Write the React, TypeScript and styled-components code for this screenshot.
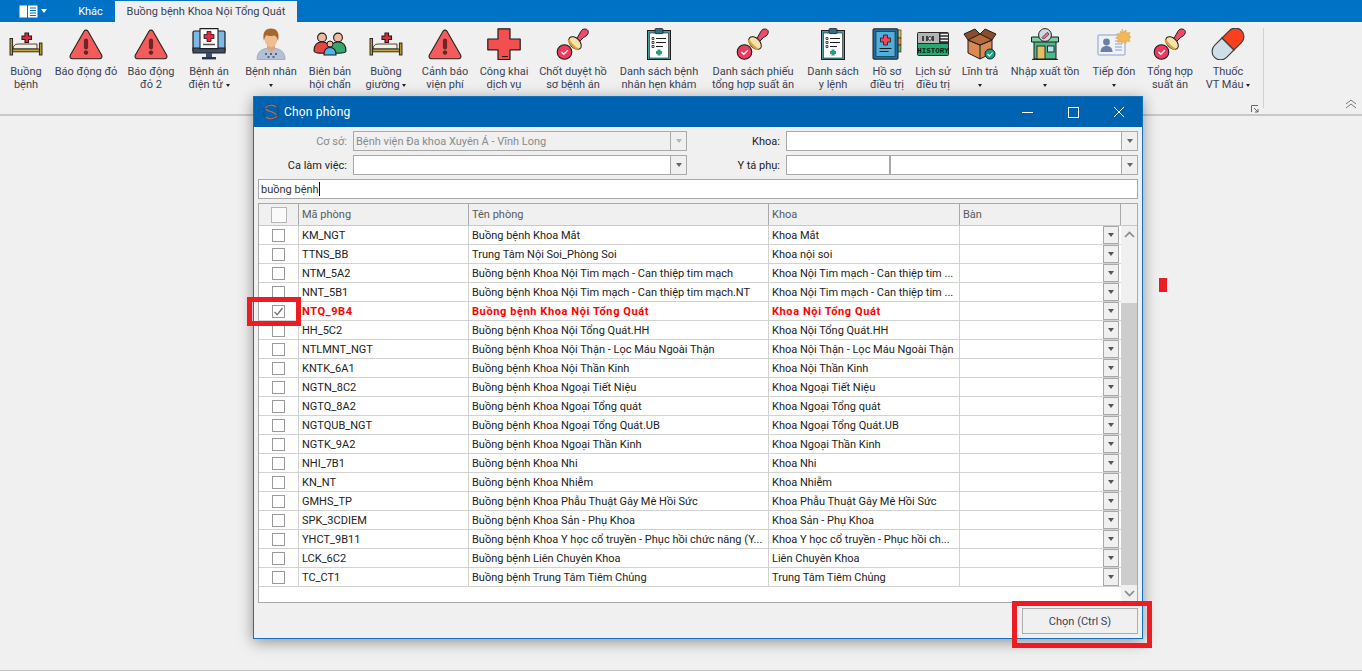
import React from 'react';
import styled, { createGlobalStyle } from 'styled-components';

const FONT = `Roboto, "Noto Sans", "Liberation Sans", sans-serif`;
const TS = '11px';

const Global = createGlobalStyle`
  html, body { margin: 0; padding: 0; background: #f0f0f0; overflow: hidden; }
  * { box-sizing: border-box; }
  body { font-family: ${FONT}; font-size: ${TS}; }
`;

const Page = styled.div`
  position: relative;
  width: 1362px;
  height: 671px;
  display: flex;
  flex-direction: column;
  background: #f0f0f0;
  overflow: hidden;
`;
const TabBar = styled.div`
  height: 22px;
  flex: none;
  background: #0072c6;
  display: flex;
  align-items: flex-end;
  padding-left: 19px;
`;
const QuickMenu = styled.div`
  width: 47px;
  height: 22px;
  display: flex;
  align-items: center;
  gap: 3px;
`;
const Tab = styled.div<{ $active?: boolean; $w: number }>`
  width: ${p => p.$w}px;
  height: ${p => (p.$active ? 21 : 22)}px;
  display: flex;
  align-items: center;
  justify-content: center;
  color: ${p => (p.$active ? '#3a4256' : '#fff')};
  background: ${p => (p.$active ? '#f0f0f0' : 'transparent')};
  font-size: ${TS};
  white-space: nowrap;
`;
const Ribbon = styled.div`
  height: 94px;
  flex: none;
  display: flex;
  position: relative;
  padding: 6px 0 0 4px;
  background: #f0f0f0;
  border-bottom: 2px solid #c8c8c8;
`;
const RibbonItem = styled.div<{ $w: number }>`
  width: ${p => p.$w}px;
  flex: none;
  display: flex;
  flex-direction: column;
  align-items: center;
  color: #3a4256;
  font-size: ${TS};
  line-height: 13px;
  text-align: center;
  white-space: nowrap;
`;
const RibbonIcon = styled.div`
  height: 32px;
  width: 34px;
  margin-bottom: 5px;
  display: flex;
  align-items: center;
  justify-content: center;
`;
const Caret = styled.span`
  display: inline-block;
  width: 0;
  height: 0;
  border-left: 2.5px solid transparent;
  border-right: 2.5px solid transparent;
  border-top: 3px solid #222;
  vertical-align: middle;
`;
const RibbonSep = styled.div`
  width: 1px;
  height: 80px;
  background: #d0d0d0;
  margin-left: 5px;
`;
const Launcher = styled.div`
  position: absolute;
  left: 1251px;
  top: 81px;
  width: 8px;
  height: 8px;
`;
const Collapse = styled.div`
  position: absolute;
  left: 1345px;
  top: 77px;
  width: 12px;
  height: 10px;
`;
const Workspace = styled.div`
  flex: 1;
  border-bottom: 1px solid #c4c4c4;
  background: #f0f0f0;
`;
const RedMark = styled.div`
  position: absolute;
  left: 1159px;
  top: 278px;
  width: 8px;
  height: 14px;
  background: #ed1c24;
`;
const RedFrame = styled.div<{ $l: number; $t: number; $w: number; $h: number }>`
  position: absolute;
  left: ${p => p.$l}px;
  top: ${p => p.$t}px;
  width: ${p => p.$w}px;
  height: ${p => p.$h}px;
  border: 5px solid #ed1c24;
  pointer-events: none;
`;
const Dialog = styled.div`
  position: absolute;
  left: 253px;
  top: 96px;
  width: 890px;
  height: 543px;
  display: flex;
  flex-direction: column;
  background: #f0f0f0;
  border: 1px solid #1272c0;
  box-shadow: 0 3px 14px rgba(0, 0, 0, 0.4);
`;
const TitleBar = styled.div`
  height: 30px;
  flex: none;
  background: #0063b1;
  color: #fff;
  display: flex;
  align-items: center;
  font-size: 12px;
  padding-left: 8px;
  gap: 4px;
`;
const TitleText = styled.div`
  flex: 1;
  letter-spacing: 0.2px;
`;
const WinButtons = styled.div`
  display: flex;
  align-items: center;
`;
const WinButton = styled.div`
  width: 46px;
  height: 30px;
  display: flex;
  align-items: center;
  justify-content: center;
`;
const Body = styled.div`
  flex: 1;
  display: flex;
  flex-direction: column;
  padding: 4px 4px 0 4px;
  gap: 4px;
  min-height: 0;
`;
const FormRow = styled.div`
  display: flex;
  height: 20px;
  align-items: stretch;
`;
const FieldLabel = styled.div<{ $w: number; $disabled?: boolean }>`
  width: ${p => p.$w}px;
  flex: none;
  padding-right: 6px;
  text-align: right;
  line-height: 22px;
  font-size: ${TS};
  color: ${p => (p.$disabled ? '#8a8a8a' : '#222')};
`;
const Combo = styled.div<{ $w: number; $disabled?: boolean }>`
  width: ${p => p.$w}px;
  flex: none;
  display: flex;
  border: 1px solid #a9a9a9;
  background: ${p => (p.$disabled ? '#f0f0f0' : '#fff')};
  color: ${p => (p.$disabled ? '#8a8a8a' : '#222')};
  font-size: ${TS};
  line-height: 20px;
`;
const ComboText = styled.div`
  flex: 1;
  padding-left: 2px;
  white-space: nowrap;
  overflow: hidden;
`;
const ComboSplit = styled.div`
  width: 104px;
  flex: none;
  border-right: 2px solid #a9a9a9;
`;
const ComboBtn = styled.div<{ $disabled?: boolean }>`
  width: 16px;
  flex: none;
  border-left: 1px solid #a9a9a9;
  background: #f0f0f0;
  display: flex;
  align-items: center;
  justify-content: center;
  &::after {
    content: '';
    width: 0;
    height: 0;
    border-left: 3.5px solid transparent;
    border-right: 3.5px solid transparent;
    border-top: 4px solid ${p => (p.$disabled ? '#b5b5b5' : '#666')};
  }
`;
const SearchBox = styled.div`
  height: 20px;
  flex: none;
  border: 1px solid #a9a9a9;
  background: #fff;
  color: #333;
  font-size: ${TS};
  line-height: 20px;
  padding-left: 2px;
  display: flex;
`;
const Cursor = styled.span`
  width: 1px;
  height: 14px;
  margin: 2px 0 0 0;
  background: #111;
`;
const Grid = styled.div`
  height: 400px;
  flex: none;
  border: 1px solid #a9a9a9;
  background: #fff;
  display: flex;
  flex-direction: column;
`;
const HeadRow = styled.div`
  height: 22px;
  flex: none;
  display: flex;
  background: #f0f0f0;
  border-bottom: 1px solid #c8c8c8;
`;
const HeadCell = styled.div<{ $w: number; $center?: boolean }>`
  width: ${p => p.$w}px;
  flex: none;
  border-right: 1px solid #a9a9a9;
  padding-left: 3px;
  color: #5a5a5a;
  font-size: ${TS};
  line-height: 22px;
  display: flex;
  align-items: ${p => (p.$center ? 'center' : 'stretch')};
  justify-content: ${p => (p.$center ? 'center' : 'flex-start')};
  ${p => (p.$center ? 'padding-left: 0;' : '')}
`;
const HeadFill = styled.div`
  flex: 1;
`;
const GridMain = styled.div`
  flex: 1;
  display: flex;
  min-height: 0;
`;
const Rows = styled.div`
  width: 862px;
  flex: none;
`;
const Row = styled.div<{ $selected?: boolean }>`
  height: 19px;
  display: flex;
  border-bottom: 1px solid #d2d2d2;
  color: ${p => (p.$selected ? '#ff0000' : '#222')};
  font-weight: ${p => (p.$selected ? 700 : 400)};
  letter-spacing: ${p => (p.$selected ? '0.6px' : 'normal')};
`;
const Cell = styled.div<{ $w: number }>`
  width: ${p => p.$w}px;
  flex: none;
  border-right: 1px solid #d2d2d2;
  padding-left: 3px;
  font-size: ${TS};
  line-height: 20px;
  white-space: nowrap;
  overflow: hidden;
`;
const CheckCell = styled.div`
  width: 40px;
  flex: none;
  border-right: 1px solid #d2d2d2;
  display: flex;
  align-items: center;
  justify-content: center;
`;
const CheckBox = styled.div<{ $head?: boolean }>`
  width: ${p => (p.$head ? 16 : 13)}px;
  height: ${p => (p.$head ? 16 : 13)}px;
  border: 1px solid ${p => (p.$head ? '#b5b5b5' : '#9a9a9a')};
  background: ${p => (p.$head ? '#fafafa' : '#fff')};
  display: flex;
  align-items: center;
  justify-content: center;
`;
const BanCell = styled.div`
  flex: 1;
  display: flex;
  justify-content: flex-end;
  padding: 0 2px 0 0;
`;
const RowBtn = styled.div`
  width: 16px;
  height: 18px;
  border: 1px solid #a9a9a9;
  background: #f0f0f0;
  display: flex;
  align-items: center;
  justify-content: center;
  &::after {
    content: '';
    width: 0;
    height: 0;
    border-left: 3.5px solid transparent;
    border-right: 3.5px solid transparent;
    border-top: 4px solid #555;
  }
`;
const ScrollBar = styled.div`
  flex: 1;
  display: flex;
  flex-direction: column;
  background: #f0f0f0;
`;
const ScrollArrow = styled.div`
  height: 17px;
  flex: none;
  display: flex;
  align-items: center;
  justify-content: center;
`;
const ScrollTrack = styled.div`
  height: 60px;
  flex: none;
`;
const ScrollThumb = styled.div`
  flex: 1;
  background: #cdcdcd;
`;
const Footer = styled.div`
  flex: 1;
  display: flex;
  justify-content: flex-end;
  align-items: flex-start;
  padding-top: 1px;
`;
const ChooseButton = styled.div`
  width: 116px;
  height: 26px;
  border: 1px solid #adadad;
  background: #f0f0f0;
  color: #3a4256;
  font-size: ${TS};
  padding-top: 1px;
  display: flex;
  align-items: center;
  justify-content: center;
`;

/* ---------- drawn icons ---------- */
const K = '#1d1d1d';
const Bed = () => (
  <svg width="34" height="32" viewBox="0 0 34 32">
    <path d="M16 5h3.500v3h3v3.500h-3v3H16v-3h-3V8h3z" fill="#e5293f" stroke={K} strokeWidth="1.100" />
    <path d="M4 21c0-3 2-5 5-5h19v5z" fill="#f3f0e0" stroke={K} strokeWidth=".8" />
    <rect x="1" y="10.500" width="2.600" height="16.500" fill="#b8962e" stroke={K} strokeWidth=".9" />
    <rect x="30.400" y="15" width="2.600" height="12" fill="#b8962e" stroke={K} strokeWidth=".9" />
    <path d="M3.600 21h26.800v2.800H3.600z" fill="#c9a63a" stroke={K} strokeWidth=".9" />
  </svg>
);
const Alert = () => (
  <svg width="34" height="32" viewBox="0 0 34 32">
    <path d="M15 3.200c1-1.400 3-1.400 4 0L32.600 27c1 1.800 0 3.800-2 3.800H3.400c-2 0-3-2-2-3.800z" fill="#f45b5b" stroke="#222" strokeWidth="1.100" />
    <rect x="15.400" y="11" width="3.200" height="10" rx="1.400" fill="#7a1f25" stroke="#222" strokeWidth=".6" />
    <circle cx="17" cy="24.600" r="1.800" fill="#7a1f25" stroke="#222" strokeWidth=".6" />
  </svg>
);
const Monitor = () => (
  <svg width="34" height="32" viewBox="0 0 34 32">
    <rect x="1" y="3" width="32" height="21" rx="1.500" fill="#7db8e8" stroke={K} strokeWidth="1.200" />
    <rect x="1" y="20" width="32" height="5" fill="#3b4f68" stroke={K} strokeWidth="1" />
    <path d="M8 .6h18v20H8z" fill="#fff" stroke={K} strokeWidth="1.100" />
    <path d="M15 3.500h4v3h3v4h-3v3h-4v-3h-3v-4h3z" fill="#e5293f" stroke={K} strokeWidth=".8" />
    <path d="M11 16.500h12" stroke="#555" strokeWidth="1.600" />
    <rect x="14" y="25" width="6" height="4" fill="#3b4f68" />
    <rect x="10" y="29" width="14" height="2.400" fill="#26364a" />
  </svg>
);
const Person = () => (
  <svg width="34" height="32" viewBox="0 0 34 32">
    <path d="M3 31.500c0-8 5-11.500 14-11.500s14 3.500 14 11.500z" fill="#b5bfd6" stroke="#98a2b8" strokeWidth=".8" />
    <path d="M13 17h8v4l-4 3-4-3z" fill="#dca67c" />
    <ellipse cx="17" cy="11.500" rx="6.400" ry="7.500" fill="#edbd94" />
    <path d="M10 13C8 5 11 .5 17 .5S26 5 24 13c-.5-3-2-5.500-4-5.500-3 1-6 .5-7.500-.5-1.500 1.500-2 3-2.500 6z" fill="#a8652c" />
    <path d="M11 26h2M16 26h2M21 26h2M13.500 29h2M18.500 29h2" stroke="#56648c" strokeWidth="1.800" />
  </svg>
);
const Group = () => (
  <svg width="34" height="32" viewBox="0 0 34 32">
    <circle cx="9" cy="9.500" r="4.400" fill="#f0b9a0" stroke={K} strokeWidth="1.100" />
    <circle cx="25" cy="9.500" r="4.400" fill="#f0b9a0" stroke={K} strokeWidth="1.100" />
    <path d="M1 23c0-6 3-9 8-9s8 3 8 9c0 3-16 3-16 0z" fill="#e5463f" stroke={K} strokeWidth="1.100" />
    <path d="M17 23c0-6 3-9 8-9s8 3 8 9c0 3-16 3-16 0z" fill="#34a86a" stroke={K} strokeWidth="1.100" />
    <circle cx="17" cy="16" r="3" fill="#f0b9a0" stroke={K} strokeWidth="1" />
    <path d="M11 27c0-5 2.500-7.500 6-7.500s6 2.500 6 7.500z" fill="#53b3e8" stroke={K} strokeWidth="1.100" />
  </svg>
);
const Cross = () => (
  <svg width="34" height="32" viewBox="0 0 34 32">
    <path d="M11 .8h12v10.200h10.200v10.800H23V31.600H11V21.800H.8V11H11z" fill="#f25050" stroke={K} strokeWidth="1.200" strokeLinejoin="round" />
    <path d="M15 28.500h6" stroke={K} strokeWidth="1" />
  </svg>
);
const Stamp = () => (
  <svg width="34" height="32" viewBox="0 0 34 32">
    <path d="M20 12l4-7c1-2 2-4 4.500-4 3 0 4.500 2 3.500 4.500-.5 2-3 3-4.500 4L22 15z" fill="#f04a6a" stroke={K} strokeWidth="1" />
    <ellipse cx="19" cy="15" rx="4.800" ry="7.500" transform="rotate(-45 19 15)" fill="#f7e3a8" stroke={K} strokeWidth="1" />
    <path d="M12.500 12c2.500 5 5 7 9.500 9.500" stroke="#d8a13c" strokeWidth="2.500" fill="none" />
    <circle cx="8.500" cy="24" r="7.300" fill="#ef3a5d" stroke={K} strokeWidth="1.100" />
    <path d="M5.500 24l2.300 2.300 4-4" stroke="#fff" strokeWidth="1.400" fill="none" />
  </svg>
);
const Clipboard = () => (
  <svg width="34" height="32" viewBox="0 0 34 32">
    <rect x="5.500" y="2.500" width="23" height="29" fill="#4e98a6" stroke={K} strokeWidth="1" />
    <rect x="7.500" y="5" width="19" height="25" fill="#fff" stroke={K} strokeWidth=".6" />
    <rect x="13" y=".6" width="8" height="5" rx="1" fill="#2f6f8a" stroke={K} strokeWidth=".8" />
    <path d="M10 9.500h2v2h-2zM10 13.500h2v2h-2zM10 17.500h2v2h-2z" fill="#fff" stroke={K} strokeWidth=".8" />
    <path d="M14 10.500h10M14 14.500h10M14 18.500h7" stroke={K} strokeWidth="1" />
    <path d="M15.500 21.500h3v1.500h1.500v3h-1.500v1.500h-3V26H14v-3h1.500z" fill="#2d9c86" />
  </svg>
);
const Book = () => (
  <svg width="34" height="32" viewBox="0 0 34 32">
    <rect x="27" y="2" width="4" height="8" fill="#d8c060" stroke={K} strokeWidth=".6" />
    <rect x="27" y="10" width="4" height="7" fill="#e89040" stroke={K} strokeWidth=".6" />
    <rect x="27" y="17" width="4" height="7" fill="#60b070" stroke={K} strokeWidth=".6" />
    <rect x="3" y=".8" width="25" height="30.400" rx="1" fill="#1f6ea8" stroke={K} strokeWidth="1" />
    <rect x="6" y="3.500" width="19" height="25" fill="#4fb0dc" stroke={K} strokeWidth=".6" />
    <path d="M13.500 7h4v3h3v4h-3v3h-4v-3h-3v-4h3z" fill="#f0455a" stroke={K} strokeWidth=".8" />
    <path d="M9.500 20.500h12M9.500 23.500h9" stroke={K} strokeWidth="1" />
  </svg>
);
const History = () => (
  <svg width="34" height="32" viewBox="0 0 34 32">
    <rect x="1" y="4" width="32" height="24" rx="2" fill="#2a2a2a" />
    <rect x="2" y="5" width="21" height="10" fill="#b4b4b4" />
    <path d="M7 8v5M11 8v5M17 8v5" stroke="#111" strokeWidth="1.400" />
    <circle cx="14" cy="10.500" r="1.800" fill="#ddd" stroke="#111" strokeWidth=".8" />
    <path d="M24.500 6.500H32M24.500 9.500H32M24.500 12.500H32" stroke="#eee" strokeWidth="1.400" />
    <rect x="2" y="16" width="30" height="11" fill="#2aa873" />
    <text x="17" y="24.500" fontSize="7.500" fontWeight="700" textAnchor="middle" fontFamily="Liberation Mono, monospace" fill="#0b1f16">HISTORY</text>
  </svg>
);
const BoxIco = () => (
  <svg width="34" height="32" viewBox="0 0 34 32">
    <path d="M5 12l12 5 12-5v13l-12 6-12-6z" fill="#d98a52" stroke={K} strokeWidth="1" />
    <path d="M17 17v14" stroke={K} strokeWidth="1" />
    <path d="M5 12L1 6l11-5 5 5 5-5 11 5-4 6-12 5z" fill="#8c4d2c" stroke={K} strokeWidth="1" strokeLinejoin="round" />
    <path d="M5 12l12-6 12 6-12 5z" stroke={K} strokeWidth="1" fill="#b56a3c" />
    <circle cx="27" cy="26" r="5" fill="#14a38a" stroke={K} strokeWidth="1" />
    <path d="M24.500 26l2 2 3-3.500" stroke="#fff" strokeWidth="1.100" fill="none" />
  </svg>
);
const Shop = () => (
  <svg width="34" height="32" viewBox="0 0 34 32">
    <rect x="6" y="12" width="22" height="19" fill="#4cb98a" stroke={K} strokeWidth="1" />
    <path d="M3.500 9h27v5h-27z" fill="#79cf9f" stroke={K} strokeWidth="1" />
    <rect x="9" y="18" width="8" height="13" fill="#e4c060" stroke={K} strokeWidth=".9" />
    <rect x="19.500" y="18" width="6.500" height="6" fill="#bfe0f0" stroke={K} strokeWidth=".9" />
    <circle cx="17" cy="7" r="6.400" fill="#cfdce6" stroke={K} strokeWidth="1" />
    <path d="M14 9.500l5-5c1.500 0 2 1 1.500 2.500l-4 3.500c-1.500.5-2.500 0-2.500-1z" fill="#ef6a7a" stroke={K} strokeWidth=".6" />
    <path d="M4 31.400h26" stroke={K} strokeWidth="1" />
  </svg>
);
const IdCard = () => (
  <svg width="34" height="32" viewBox="0 0 34 32">
    <rect x="1" y="7" width="27" height="20" rx="1" fill="#eef2fa" stroke="#8aa0cc" strokeWidth="1" />
    <circle cx="9.500" cy="14" r="3.400" fill="#6d7fa3" />
    <path d="M3.500 24c0-4 2.500-6 6-6s6 2 6 6z" fill="#6d7fa3" />
    <path d="M18 13h7M18 16h7M18 19h7M18 22h7" stroke="#8ca0c6" strokeWidth="1" />
    <path d="M25 1l1.500 3 2.500-2 .5 3 3.500-.5-1 3 2 1.500-2 1.500 1 3-3.500-.5-.5 2.500-2.500-2-1.500 2.500-1.500-2.500-2.500 1 .5-3-3-1.500 2.500-1.500-1-3 3 .5.500-3 2 2z" fill="#f0b85a" stroke="#d89a3c" strokeWidth=".5" />
  </svg>
);
const Pill = () => (
  <svg width="34" height="32" viewBox="0 0 34 32">
    <g transform="rotate(-45 17 16)">
      <path d="M17 7.500H6.500a8.500 8.500 0 000 17H17z" fill="#cfdfe8" stroke="#3a3a3a" strokeWidth="1.100" />
      <path d="M17 7.500h10.500a8.500 8.500 0 010 17H17z" fill="#f8401f" stroke="#3a3a3a" strokeWidth="1.100" />
    </g>
  </svg>
);
const Check = () => (
  <svg width="11" height="11" viewBox="0 0 11 11">
    <path d="M1.500 6l2.700 2.700 5.300-6.700" fill="none" stroke="#777" strokeWidth="1.400" />
  </svg>
);
const Logo = () => (
  <svg width="18" height="18" viewBox="0 0 18 18">
    <circle cx="9" cy="9" r="7.600" fill="none" stroke="#174d80" strokeWidth="1.400" />
    <path d="M3 5c2-3 8-4 11-1M15 13c-2 3-8 4-11 1M4 6c1 3 9 2 10 6" fill="none" stroke="#c9683a" strokeWidth="1.200" />
  </svg>
);
const Chevron = ({ up }: { up?: boolean }) => (
  <svg width="11" height="7" viewBox="0 0 11 7">
    <path d={up ? 'M1 6l4.500-4.500L10 6' : 'M1 1l4.500 4.500L10 1'} fill="none" stroke="#8a8a8a" strokeWidth="1.700" />
  </svg>
);

type RibbonDef = { w: number; icon: React.ReactNode; l1: string; l2?: string; caret?: boolean };
const ribbon: RibbonDef[] = [
  { w: 44, icon: <Bed />, l1: 'Buồng', l2: 'bệnh' },
  { w: 76, icon: <Alert />, l1: 'Báo động đỏ' },
  { w: 54, icon: <Alert />, l1: 'Báo động', l2: 'đỏ 2' },
  { w: 62, icon: <Monitor />, l1: 'Bệnh án', l2: 'điện tử', caret: true },
  { w: 62, icon: <Person />, l1: 'Bệnh nhân', l2: '', caret: true },
  { w: 56, icon: <Group />, l1: 'Biên bản', l2: 'hội chẩn' },
  { w: 56, icon: <Bed />, l1: 'Buồng', l2: 'giường', caret: true },
  { w: 62, icon: <Alert />, l1: 'Cảnh báo', l2: 'viện phí' },
  { w: 56, icon: <Cross />, l1: 'Công khai', l2: 'dịch vụ' },
  { w: 82, icon: <Stamp />, l1: 'Chốt duyệt hồ', l2: 'sơ bệnh án' },
  { w: 90, icon: <Clipboard />, l1: 'Danh sách bệnh', l2: 'nhân hẹn khám' },
  { w: 98, icon: <Stamp />, l1: 'Danh sách phiếu', l2: 'tổng hợp suất ăn' },
  { w: 62, icon: <Clipboard />, l1: 'Danh sách', l2: 'y lệnh' },
  { w: 46, icon: <Book />, l1: 'Hồ sơ', l2: 'điều trị' },
  { w: 46, icon: <History />, l1: 'Lịch sử', l2: 'điều trị' },
  { w: 48, icon: <BoxIco />, l1: 'Lĩnh trả', l2: '', caret: true },
  { w: 82, icon: <Shop />, l1: 'Nhập xuất tồn', l2: '', caret: true },
  { w: 56, icon: <IdCard />, l1: 'Tiếp đón', l2: '', caret: true },
  { w: 56, icon: <Stamp />, l1: 'Tổng hợp', l2: 'suất ăn' },
  { w: 60, icon: <Pill />, l1: 'Thuốc', l2: 'VT Máu', caret: true },
];

const rows: [string, string, string, boolean?][] = [
  ['KM_NGT', 'Buồng bệnh Khoa Mắt', 'Khoa Mắt'],
  ['TTNS_BB', 'Trung Tâm Nội Soi_Phòng Soi', 'Khoa nội soi'],
  ['NTM_5A2', 'Buồng bệnh Khoa Nội Tim mạch - Can thiệp tim mạch', 'Khoa Nội Tim mạch - Can thiệp tim ...'],
  ['NNT_5B1', 'Buồng bệnh Khoa Nội Tim mạch - Can thiệp tim mạch.NT', 'Khoa Nội Tim mạch - Can thiệp tim ...'],
  ['NTQ_9B4', 'Buồng bệnh Khoa Nội Tổng Quát', 'Khoa Nội Tổng Quát', true],
  ['HH_5C2', 'Buồng bệnh Khoa Nội Tổng Quát.HH', 'Khoa Nội Tổng Quát.HH'],
  ['NTLMNT_NGT', 'Buồng bệnh Khoa Nội Thận - Lọc Máu Ngoài Thận', 'Khoa Nội Thận - Lọc Máu Ngoài Thận'],
  ['KNTK_6A1', 'Buồng bệnh Khoa Nội Thần Kinh', 'Khoa Nội Thần Kinh'],
  ['NGTN_8C2', 'Buồng bệnh Khoa Ngoại Tiết Niệu', 'Khoa Ngoại Tiết Niệu'],
  ['NGTQ_8A2', 'Buồng bệnh Khoa Ngoại Tổng quát', 'Khoa Ngoại Tổng quát'],
  ['NGTQUB_NGT', 'Buồng bệnh Khoa Ngoại Tổng Quát.UB', 'Khoa Ngoại Tổng Quát.UB'],
  ['NGTK_9A2', 'Buồng bệnh Khoa Ngoại Thần Kinh', 'Khoa Ngoại Thần Kinh'],
  ['NHI_7B1', 'Buồng bệnh Khoa Nhi', 'Khoa Nhi'],
  ['KN_NT', 'Buồng bệnh Khoa Nhiễm', 'Khoa Nhiễm'],
  ['GMHS_TP', 'Buồng bệnh Khoa Phẫu Thuật Gây Mê Hồi Sức', 'Khoa Phẫu Thuật Gây Mê Hồi Sức'],
  ['SPK_3CDIEM', 'Buồng bệnh Khoa Sản - Phụ Khoa', 'Khoa Sản - Phụ Khoa'],
  ['YHCT_9B11', 'Buồng bệnh Khoa Y học cổ truyền - Phục hồi chức năng (Y...', 'Khoa Y học cổ truyền - Phục hồi ch...'],
  ['LCK_6C2', 'Buồng bệnh Liên Chuyên Khoa', 'Liên Chuyên Khoa'],
  ['TC_CT1', 'Buồng bệnh Trung Tâm Tiêm Chủng', 'Trung Tâm Tiêm Chủng'],
];

export default function App() {
  return (
    <Page>
      <Global />
      <TabBar>
        <QuickMenu>
          <svg width="19" height="13" viewBox="0 0 19 13">
            <rect x=".5" y=".5" width="18" height="12" fill="#fff" />
            <path d="M8.500 0v13" stroke="#0072c6" strokeWidth="1" />
            <path d="M11 3h6M11 5.500h6M11 8h6M11 10.500h6" stroke="#0072c6" strokeWidth="1" />
          </svg>
          <svg width="6" height="4" viewBox="0 0 6 4"><path d="M0 0h6L3 4z" fill="#fff" /></svg>
        </QuickMenu>
        <Tab $w={49}>Khác</Tab>
        <Tab $active $w={182}>Buồng bệnh Khoa Nội Tổng Quát</Tab>
      </TabBar>
      <Ribbon>
        {ribbon.map((r, i) => (
          <RibbonItem key={i} $w={r.w}>
            <RibbonIcon>{r.icon}</RibbonIcon>
            <div>{r.l1}</div>
            {r.l2 !== undefined && (
              <div>
                {r.l2}
                {r.caret && (r.l2 ? ' ' : '')}
                {r.caret && <Caret />}
              </div>
            )}
          </RibbonItem>
        ))}
        <RibbonSep />
        <Launcher>
          <svg width="8" height="8" viewBox="0 0 8 8">
            <path d="M.5 7V.5H7M3 3l4 4M4 7h3V4" fill="none" stroke="#666" strokeWidth="1" />
          </svg>
        </Launcher>
        <Collapse>
          <svg width="12" height="10" viewBox="0 0 12 10">
            <path d="M1 5l5-4 5 4M1 9l5-4 5 4" fill="none" stroke="#777" strokeWidth="1" />
          </svg>
        </Collapse>
      </Ribbon>
      <Workspace />
      <RedMark />
      <Dialog>
        <TitleBar>
          <Logo />
          <TitleText>Chọn phòng</TitleText>
          <WinButtons>
            <WinButton>
              <svg width="11" height="11" viewBox="0 0 11 11"><path d="M0 5.500h11" stroke="#fff" /></svg>
            </WinButton>
            <WinButton>
              <svg width="11" height="11" viewBox="0 0 11 11"><rect x=".5" y=".5" width="10" height="10" fill="none" stroke="#fff" /></svg>
            </WinButton>
            <WinButton>
              <svg width="12" height="12" viewBox="0 0 12 12"><path d="M1 1l10 10M11 1L1 11" stroke="#fff" /></svg>
            </WinButton>
          </WinButtons>
        </TitleBar>
        <Body>
          <FormRow>
            <FieldLabel $w={95} $disabled>Cơ sở:</FieldLabel>
            <Combo $w={334} $disabled>
              <ComboText>Bệnh viện Đa khoa Xuyên Á - Vĩnh Long</ComboText>
              <ComboBtn $disabled />
            </Combo>
            <FieldLabel $w={99}>Khoa:</FieldLabel>
            <Combo $w={352}>
              <ComboText />
              <ComboBtn />
            </Combo>
          </FormRow>
          <FormRow>
            <FieldLabel $w={95}>Ca làm việc:</FieldLabel>
            <Combo $w={334}>
              <ComboText />
              <ComboBtn />
            </Combo>
            <FieldLabel $w={99}>Y tá phụ:</FieldLabel>
            <Combo $w={352}>
              <ComboSplit />
              <ComboText />
              <ComboBtn />
            </Combo>
          </FormRow>
          <SearchBox>
            buồng bệnh
            <Cursor />
          </SearchBox>
          <Grid>
            <HeadRow>
              <HeadCell $w={40} $center><CheckBox $head /></HeadCell>
              <HeadCell $w={170}>Mã phòng</HeadCell>
              <HeadCell $w={300}>Tên phòng</HeadCell>
              <HeadCell $w={191}>Khoa</HeadCell>
              <HeadCell $w={161}>Bàn</HeadCell>
              <HeadFill />
            </HeadRow>
            <GridMain>
              <Rows>
                {rows.map(([code, name, dept, sel]) => (
                  <Row key={code} $selected={sel}>
                    <CheckCell>
                      <CheckBox>{sel && <Check />}</CheckBox>
                    </CheckCell>
                    <Cell $w={170}>{code}</Cell>
                    <Cell $w={300}>{name}</Cell>
                    <Cell $w={191}>{dept}</Cell>
                    <BanCell><RowBtn /></BanCell>
                  </Row>
                ))}
              </Rows>
              <ScrollBar>
                <ScrollArrow><Chevron up /></ScrollArrow>
                <ScrollTrack />
                <ScrollThumb />
                <ScrollArrow><Chevron /></ScrollArrow>
              </ScrollBar>
            </GridMain>
          </Grid>
          <Footer>
            <ChooseButton>Chọn (Ctrl S)</ChooseButton>
          </Footer>
        </Body>
      </Dialog>
      <RedFrame $l={247} $t={297} $w={54} $h={29} />
      <RedFrame $l={1012} $t={601} $w={140} $h={47} />
    </Page>
  );
}
